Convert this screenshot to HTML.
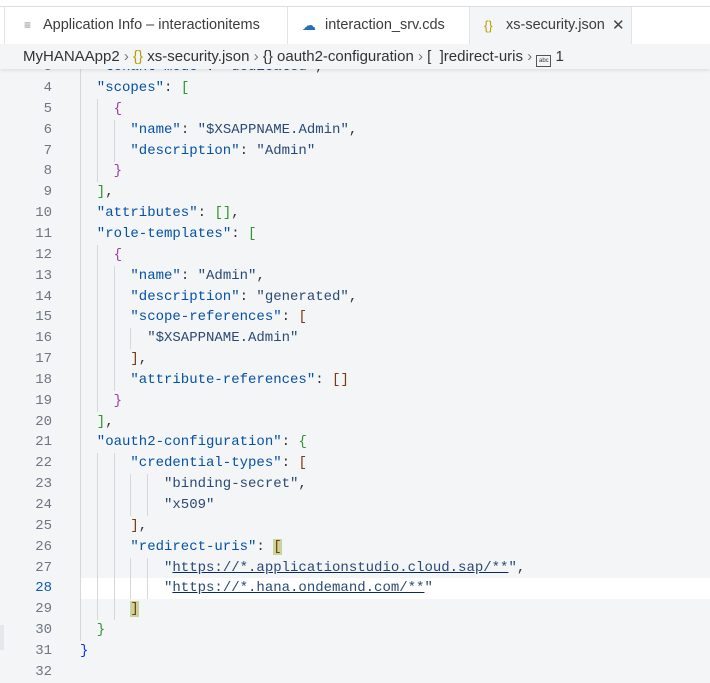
<!DOCTYPE html>
<html><head><meta charset="utf-8"><style>
*{margin:0;padding:0;box-sizing:border-box}
body{width:710px;height:676px;overflow:hidden;background:#f4f5f7;position:relative;font-family:"Liberation Sans",sans-serif}
#top{position:absolute;left:0;top:0;width:710px;height:7px;background:#fff;border-bottom:1px solid #dcdde0}
#tabs{position:absolute;left:0;top:7px;width:710px;height:37px;background:#fff;z-index:4}
.tab{position:absolute;top:0;height:37px;font-size:14.5px;color:#3c3c3c;line-height:37px;border-right:1px solid #e3e4e6;white-space:nowrap;overflow:hidden}
#crumb{position:absolute;left:0;top:44px;width:710px;height:25px;background:#f4f5f7;font-size:15px;color:#333;line-height:25px;padding-left:23px;z-index:3;box-shadow:0 2px 3px rgba(0,0,0,.08);white-space:nowrap}
.ln{position:absolute;left:0;width:52px;text-align:right;font-family:"Liberation Mono",monospace;font-size:14px;color:#6e7681;height:21px;line-height:21px}
.cl{position:absolute;left:80px;font-family:"Liberation Mono",monospace;font-size:14px;height:21px;line-height:21px;white-space:pre;color:#333}
.g{position:absolute;width:1px;background:#d5d7da;height:21px}
.k{color:#0451a5}.v{color:#294a75}
.b0{color:#0431fa}.b1{color:#319331}.b2{color:#a03c9e}.b3{color:#7b3814}
.u{text-decoration:underline;text-decoration-color:#0b2a5a}
</style></head><body>
<div id="top"></div>
<div id="tabs">
<div class="tab" style="left:4px;width:284px;border-left:1px solid #e3e4e6;padding-left:38px"><span style="position:absolute;left:19px;color:#888;font-size:12px">≡</span>Application Info – interactionitems</div>
<div class="tab" style="left:288px;width:182px;padding-left:37px"><span style="position:absolute;left:14px;top:0;color:#2a6fb5;font-size:14px">☁</span>interaction_srv.cds</div>
<div class="tab" style="left:470px;width:162px;background:#f4f5f7;padding-left:36px"><span style="position:absolute;left:14px;color:#b5a000;font-size:13px">{}</span>xs-security.json<span style="position:absolute;left:142px;font-size:15px;color:#444">✕</span></div>
</div>
<div id="crumb">MyHANAApp2 <span style="color:#777">›</span> <span style="color:#b5a000">{}</span> xs-security.json <span style="color:#777">›</span> {} oauth2-configuration <span style="color:#777">›</span> [&nbsp; ]redirect-uris <span style="color:#777">›</span> <span style="display:inline-block;width:15px;height:12px;border:1px solid #555;font-size:6px;line-height:10px;text-align:center;vertical-align:-1px">abc</span> 1</div>
<div style="position:absolute;left:0;top:625px;width:4px;height:25px;background:#e6e7ea"></div>
<div style="position:absolute;left:80px;top:578px;width:630px;height:21px;background:#fff"></div>
<div id="code"></div>
<script>
const L=[
[3,2,'<span class="k">"tenant-mode"</span>: <span class="v">"dedicated"</span>,'],
[4,2,'<span class="k">"scopes"</span>: <span class="b1">[</span>'],
[5,4,'<span class="b2">{</span>'],
[6,6,'<span class="k">"name"</span>: <span class="v">"$XSAPPNAME.Admin"</span>,'],
[7,6,'<span class="k">"description"</span>: <span class="v">"Admin"</span>'],
[8,4,'<span class="b2">}</span>'],
[9,2,'<span class="b1">]</span>,'],
[10,2,'<span class="k">"attributes"</span>: <span class="b1">[]</span>,'],
[11,2,'<span class="k">"role-templates"</span>: <span class="b1">[</span>'],
[12,4,'<span class="b2">{</span>'],
[13,6,'<span class="k">"name"</span>: <span class="v">"Admin"</span>,'],
[14,6,'<span class="k">"description"</span>: <span class="v">"generated"</span>,'],
[15,6,'<span class="k">"scope-references"</span>: <span class="b3">[</span>'],
[16,8,'<span class="v">"$XSAPPNAME.Admin"</span>'],
[17,6,'<span class="b3">]</span>,'],
[18,6,'<span class="k">"attribute-references"</span>: <span class="b3">[]</span>'],
[19,4,'<span class="b2">}</span>'],
[20,2,'<span class="b1">]</span>,'],
[21,2,'<span class="k">"oauth2-configuration"</span>: <span class="b1">{</span>'],
[22,6,'<span class="k">"credential-types"</span>: <span class="b3">[</span>'],
[23,10,'<span class="v">"binding-secret"</span>,'],
[24,10,'<span class="v">"x509"</span>'],
[25,6,'<span class="b3">]</span>,'],
[26,6,'<span class="k">"redirect-uris"</span>: <span class="b3" style="background:#c9d49a">[</span>'],
[27,10,'<span class="v">"<span class="u">https://*.applicationstudio.cloud.sap/**</span>"</span>,'],
[28,10,'<span class="v">"<span class="u">https://*.hana.ondemand.com/**</span>"</span>'],
[29,6,'<span class="b3" style="background:#c9d49a">]</span>'],
[30,2,'<span class="b1">}</span>'],
[31,0,'<span class="b0">}</span>'],
[32,0,'']];
let h='';const cw=8.4;
for(const [n,ind,t] of L){const top=Math.round(78+(n-4)*20.85);
h+=`<div class="ln" style="top:${top}px;${n==28?'color:#0b5cad':''}">${n}</div>`;
for(let c=0;c<ind;c+=2){h+=`<div class="g" style="left:${80+c*cw}px;top:${top}px"></div>`;}
h+=`<div class="cl" style="top:${top}px;left:${80+ind*cw}px">${t}</div>`;}
document.getElementById('code').innerHTML=h;
</script>
</body></html>
